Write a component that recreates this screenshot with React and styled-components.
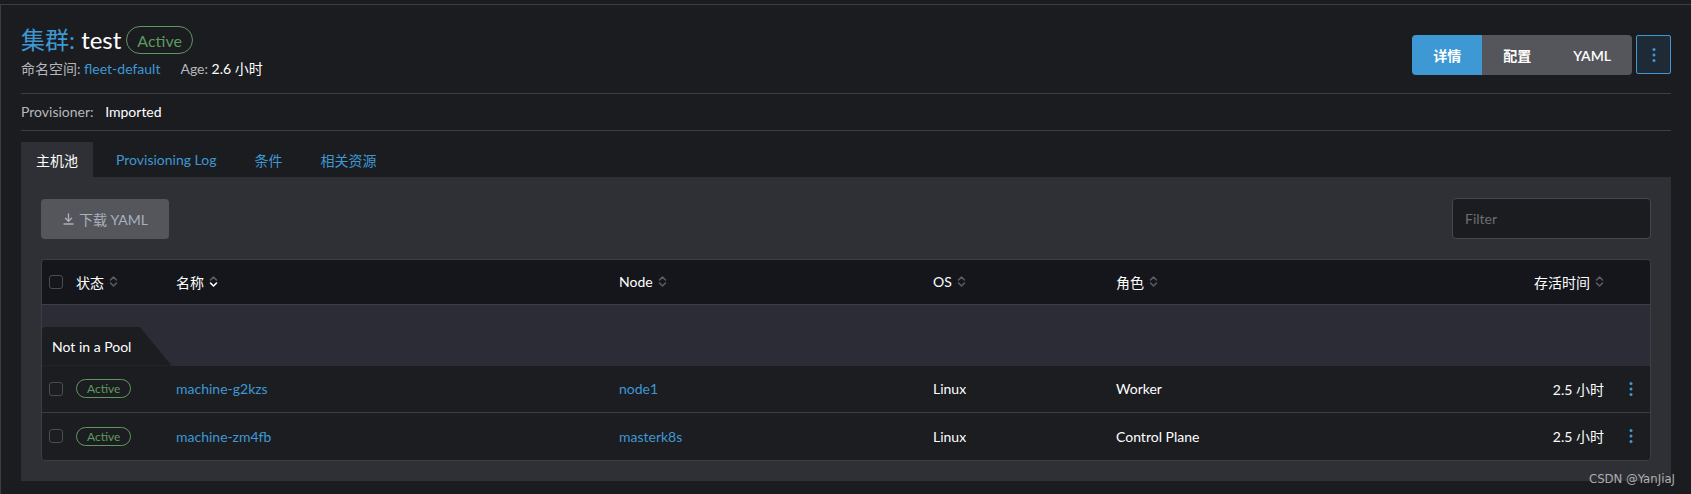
import React from 'react'
import styled, { createGlobalStyle } from 'styled-components'

const GlobalStyle = createGlobalStyle`
	html, body {
		margin: 0;
		padding: 0;
		background: #1b1c20;
	}
	body {
		font-family: Lato, 'Noto Sans CJK SC', sans-serif;
		font-size: 14px;
		color: #e6e6e6;
	}
	* {
		box-sizing: border-box;
	}
`

const Page = styled.div`
	position: relative;
	margin-top: 4px;
	min-height: 490px;
	padding: 0 20px;
	border-top: 1px solid #3c3e45;
	border-left: 1px solid #3c3e45;
`

const Header = styled.header`
	display: flex;
	justify-content: space-between;
	align-items: flex-start;
	padding-top: 21px;
`

const TitleRow = styled.div`
	display: flex;
	align-items: center;
	gap: 5px;
`

const Title = styled.h1`
	margin: 0;
	font-size: 24px;
	line-height: 28px;
	font-weight: 400;
	color: #fff;
`

const TitleLabel = styled.span`
	color: #3d98d3;
`

const Badge = styled.span`
	display: inline-flex;
	align-items: center;
	height: ${p => (p.$small ? '19px' : '28px')};
	padding: 0 10px;
	border: 1px solid #5d995d;
	border-radius: 14px;
	color: #5d995d;
	font-size: ${p => (p.$small ? '12px' : '16px')};
`

const SubTitle = styled.div`
	display: flex;
	gap: 20px;
	margin-top: 6px;
	font-size: 14px;
	line-height: 18px;
`

const Label = styled.span`
	color: #b6b7bc;
	margin-right: ${p => p.$gap || 0}px;
`

const Value = styled.span`
	color: #fff;
`

const Link = styled.a`
	color: #3d98d3;
	text-decoration: none;
	cursor: pointer;
`

const Actions = styled.div`
	display: flex;
	gap: 4px;
	margin-top: 9px;
`

const ButtonGroup = styled.div`
	display: flex;
	border-radius: 4px;
	overflow: hidden;
`

const GroupButton = styled.button`
	height: 40px;
	padding: 0 21px;
	border: 0;
	background: ${p => (p.$active ? '#3d98d3' : '#55565b')};
	color: #fff;
	font-family: inherit;
	font-size: 14px;
	font-weight: 600;
`

const MenuButton = styled.button`
	display: flex;
	align-items: center;
	justify-content: center;
	width: 35px;
	height: 39px;
	padding: 0;
	border: 1px solid #3d98d3;
	border-radius: 2px;
	background: #1f2a37;
`

const Divider = styled.hr`
	margin: 0;
	border: 0;
	border-top: 1px solid #3c3e45;
	margin-top: ${p => p.$top || 0}px;
`

const InfoRow = styled.div`
	padding: 9px 0;
	font-size: 14px;
	line-height: 18px;
`

const Tabs = styled.ul`
	display: flex;
	gap: 8px;
	margin: 11px 0 0;
	padding: 0;
	list-style: none;
`

const Tab = styled.li`
	height: 35px;
	padding: 0 15px;
	display: flex;
	align-items: center;
	font-size: 14px;
	background: ${p => (p.$active ? '#2f3036' : 'transparent')};
	color: ${p => (p.$active ? '#fff' : '#3d98d3')};
	cursor: pointer;
`

const Panel = styled.section`
	background: #2f3036;
	padding: 21px 20px 20px;
`

const Toolbar = styled.div`
	display: flex;
	justify-content: space-between;
	align-items: center;
`

const DownloadButton = styled.button`
	display: flex;
	align-items: center;
	gap: 5px;
	height: 40px;
	padding: 0 21px 0 22px;
	border: 0;
	border-radius: 4px;
	background: #55565b;
	color: #a9b0be;
	font-family: inherit;
	font-size: 14px;
`

const FilterInput = styled.input`
	width: 199px;
	height: 41px;
	padding: 0 12px;
	border: 1px solid #45474e;
	border-radius: 4px;
	background: #1b1c20;
	color: #fff;
	font-family: inherit;
	font-size: 14px;
	outline: none;

	&::placeholder {
		color: #6b6d74;
	}
`

const TableBox = styled.div`
	margin-top: 20px;
	border: 1px solid #3c3e45;
	border-radius: 4px;
	overflow: hidden;
`

const Table = styled.table`
	width: 100%;
	table-layout: fixed;
	border-collapse: collapse;
`

const Th = styled.th`
	height: 44px;
	padding: 0 ${p => (p.$right ? '8px' : '0')} 0 7px;
	background: #15161b;
	border-bottom: 1px solid #3c3e45;
	color: #fff;
	font-size: 14px;
	font-weight: 400;
	text-align: ${p => (p.$right ? 'right' : 'left')};
`

const HeadLabel = styled.span`
	display: inline-flex;
	align-items: center;
	gap: 5px;
`

const GroupCell = styled.td`
	padding: 22px 0 0;
	background: #2b2c35;
`

const GroupTab = styled.div`
	display: inline-flex;
	align-items: center;
	height: 39px;
	padding: 0 40px 0 10px;
	background: #1c1d21;
	border-top-left-radius: 4px;
	color: #fff;
	font-size: 14px;
	clip-path: polygon(0 0, calc(100% - 32px) 0, 100% 100%, 0 100%);
`

const Td = styled.td`
	height: 47px;
	padding: 0 ${p => (p.$right ? '8px' : '0')} 0 7px;
	background: #1c1d21;
	border-top: ${p => (p.$divided ? '1px solid #3c3e45' : '0')};
	font-size: 14px;
	color: #fff;
	text-align: ${p => (p.$right ? 'right' : 'left')};
	white-space: nowrap;
`

const Checkbox = styled.span`
	display: block;
	width: 14px;
	height: 14px;
	border: 1px solid #4a4c53;
	border-radius: 3px;
`

const RowMenu = styled.span`
	display: flex;
	justify-content: center;
	cursor: pointer;
`

const Watermark = styled.span`
	position: absolute;
	right: 16px;
	top: 466px;
	color: rgba(220, 220, 220, 0.75);
	font-size: 13px;
	font-family: 'DejaVu Sans Condensed', 'Liberation Sans Narrow', sans-serif;
`

const SortIcon = ({ active }) => (
	<svg width="9" height="13" viewBox="0 0 9 13" fill="none" strokeWidth="1.6" strokeLinecap="round" strokeLinejoin="round">
		<path d="M1.5 5 L4.5 2 L7.5 5" stroke="#5a5c63" />
		<path d="M1.5 8 L4.5 11 L7.5 8" stroke={active ? '#fff' : '#5a5c63'} />
	</svg>
)

const Dots = ({ color = '#3d98d3' }) => (
	<svg width="4" height="16" viewBox="0 0 4 16">
		<circle cx="2" cy="2.5" r="1.5" fill={color} />
		<circle cx="2" cy="8" r="1.5" fill={color} />
		<circle cx="2" cy="13.5" r="1.5" fill={color} />
	</svg>
)

const DownloadIcon = () => (
	<svg width="11" height="12" viewBox="0 0 11 12" fill="none" stroke="#a9b0be" strokeWidth="1.4" strokeLinecap="round">
		<path d="M5.5 1 V8" />
		<path d="M2.5 5.2 L5.5 8.2 L8.5 5.2" />
		<path d="M1 11 H10" />
	</svg>
)

const columns = [
	{ key: 'check', width: 27 },
	{ key: 'state', width: 100, label: '状态' },
	{ key: 'name', width: 443, label: '名称', sorted: true },
	{ key: 'node', width: 314, label: 'Node' },
	{ key: 'os', width: 183, label: 'OS' },
	{ key: 'role', width: 341, label: '角色' },
	{ key: 'age', width: 162, label: '存活时间', right: true },
	{ key: 'menu', width: 38 }
]

const machines = [
	{ name: 'machine-g2kzs', node: 'node1', os: 'Linux', role: 'Worker', age: '2.5 小时' },
	{ name: 'machine-zm4fb', node: 'masterk8s', os: 'Linux', role: 'Control Plane', age: '2.5 小时' }
]

export default function App() {
	return (
		<>
			<GlobalStyle />
			<Page>
				<Header>
					<div>
						<TitleRow>
							<Title>
								<TitleLabel>集群:</TitleLabel> test
							</Title>
							<Badge>Active</Badge>
						</TitleRow>
						<SubTitle>
							<span>
								<Label>命名空间: </Label>
								<Link>fleet-default</Link>
							</span>
							<span>
								<Label>Age: </Label>
								<Value>2.6 小时</Value>
							</span>
						</SubTitle>
					</div>
					<Actions>
						<ButtonGroup>
							<GroupButton $active>详情</GroupButton>
							<GroupButton>配置</GroupButton>
							<GroupButton>YAML</GroupButton>
						</ButtonGroup>
						<MenuButton>
							<Dots />
						</MenuButton>
					</Actions>
				</Header>

				<Divider $top={15} />
				<InfoRow>
					<Label $gap={8}>Provisioner:</Label> <Value>Imported</Value>
				</InfoRow>
				<Divider />

				<Tabs>
					<Tab $active>主机池</Tab>
					<Tab>Provisioning Log</Tab>
					<Tab>条件</Tab>
					<Tab>相关资源</Tab>
				</Tabs>

				<Panel>
					<Toolbar>
						<DownloadButton>
							<DownloadIcon />
							下载 YAML
						</DownloadButton>
						<FilterInput placeholder="Filter" />
					</Toolbar>

					<TableBox>
						<Table>
							<colgroup>
								{columns.map(c => (
									<col key={c.key} style={{ width: c.width }} />
								))}
							</colgroup>
							<thead>
								<tr>
									<Th>
										<Checkbox />
									</Th>
									{columns.slice(1, -1).map(c => (
										<Th key={c.key} $right={c.right}>
											<HeadLabel>
												{c.label}
												<SortIcon active={c.sorted} />
											</HeadLabel>
										</Th>
									))}
									<Th />
								</tr>
							</thead>
							<tbody>
								<tr>
									<GroupCell colSpan={columns.length}>
										<GroupTab>Not in a Pool</GroupTab>
									</GroupCell>
								</tr>
								{machines.map((m, i) => (
									<tr key={m.name}>
										<Td $divided={i > 0}>
											<Checkbox />
										</Td>
										<Td $divided={i > 0}>
											<Badge $small>Active</Badge>
										</Td>
										<Td $divided={i > 0}>
											<Link>{m.name}</Link>
										</Td>
										<Td $divided={i > 0}>
											<Link>{m.node}</Link>
										</Td>
										<Td $divided={i > 0}>{m.os}</Td>
										<Td $divided={i > 0}>{m.role}</Td>
										<Td $divided={i > 0} $right>
											{m.age}
										</Td>
										<Td $divided={i > 0} $right>
											<RowMenu>
												<Dots />
											</RowMenu>
										</Td>
									</tr>
								))}
							</tbody>
						</Table>
					</TableBox>
				</Panel>
				<Watermark>CSDN @YanJiaJ</Watermark>
			</Page>
		</>
	)
}
